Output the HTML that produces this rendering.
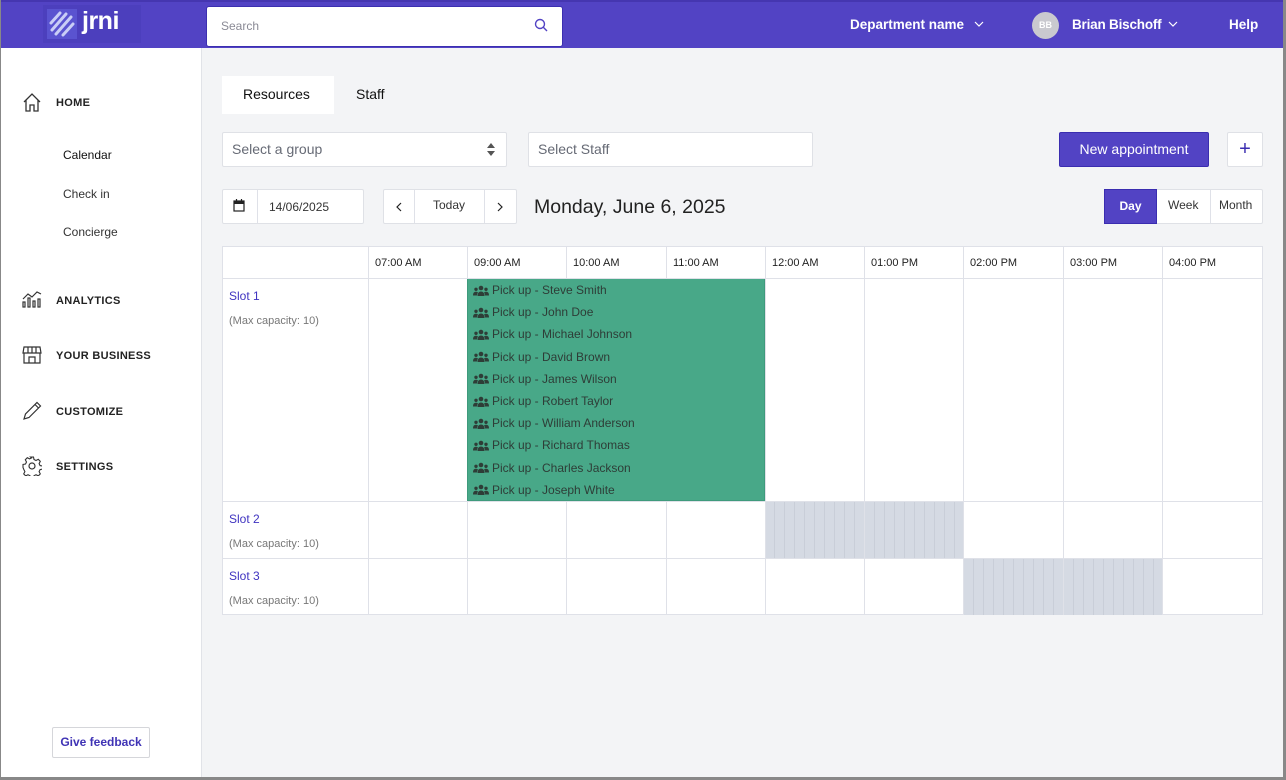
<!DOCTYPE html>
<html><head><meta charset="utf-8"><style>
*{box-sizing:border-box;margin:0;padding:0}
body{width:1286px;height:780px;overflow:hidden;background:#888;font-family:"Liberation Sans",sans-serif;position:relative}
.a{position:absolute}
#page{position:absolute;left:1px;top:0;width:1282px;height:777px;background:#f3f4f6;overflow:hidden}
#hdr{left:0;top:0;width:1282px;height:48px;background:#5243c4;border-top:2px solid #4536b0}
#side{left:0;top:48px;width:201px;height:729px;background:#fff;border-right:1px solid #e1e3e8}
.nav{font-size:11px;font-weight:bold;color:#222;letter-spacing:.3px}
.sub{font-size:12px;color:#333}
.box{background:#fff;border:1px solid #dfe1e6;border-radius:2px}
.th{font-size:11px;color:#222}
.ev{font-size:12px;color:#2e3d37;white-space:nowrap;height:22.2px;display:flex;align-items:center}
.ev svg{margin-right:3px}
.hl{position:absolute;height:1px;background:#dfe1e8}
.vl{position:absolute;width:1px;background:#dfe1e8}
.st{background:#d5dae3 repeating-linear-gradient(90deg,transparent 0,transparent 9px,#c9ced8 9px,#c9ced8 10px)}
</style></head><body>
<svg width="0" height="0" style="position:absolute"><defs><g id="pp" fill="#2e3d37"><circle cx="8" cy="3" r="2.3"/><circle cx="3" cy="4.3" r="1.7"/><circle cx="13" cy="4.3" r="1.7"/><path d="M4.5 11c0-3 1.5-4.5 3.5-4.5s3.5 1.5 3.5 4.5z"/><path d="M0 10.5c0-2.5 1-3.7 3-3.7 1 0 1.5.3 2 .8-.7.8-1 1.8-1 2.9z"/><path d="M16 10.5c0-2.5-1-3.7-3-3.7-1 0-1.5.3-2 .8.7.8 1 1.8 1 2.9z"/></g></defs></svg>
<div id="page">
<div class="a" id="hdr">
 <div class="a" style="left:42px;top:3px;width:98px;height:38px;background:#4c3fbd"></div>
 <svg class="a" style="left:46px;top:7px" width="30" height="30" viewBox="0 0 30 30"><rect width="30" height="30" fill="#5a53d0"/><g stroke="#c9cdf6" stroke-width="3" stroke-linecap="round"><line x1="4" y1="14" x2="13" y2="4"/><line x1="5" y1="21" x2="19" y2="5"/><line x1="9" y1="25" x2="24" y2="8"/><line x1="16" y1="26" x2="26" y2="15"/></g></svg>
 <div class="a" style="left:81px;top:5px;font-size:25px;font-weight:bold;color:#fff;letter-spacing:-0.5px">jrni</div>
 <div class="a" style="left:205px;top:4px;width:357px;height:41px;background:#fff;border:1px solid #3c2fb0;border-radius:3px"></div>
 <div class="a" style="left:220px;top:17px;font-size:12px;color:#8a8a95">Search</div>
 <svg class="a" style="left:533px;top:16px" width="14" height="14" viewBox="0 0 14 14"><circle cx="6" cy="6" r="4.5" fill="none" stroke="#5243c4" stroke-width="1.4"/><line x1="9.3" y1="9.3" x2="13" y2="13" stroke="#5243c4" stroke-width="1.4"/></svg>
 <div class="a" style="left:849px;top:15px;font-size:13.5px;font-weight:bold;color:#fff">Department name</div>
 <svg class="a" style="left:973px;top:19px" width="10" height="7"><path d="M1 1l4 4 4-4" fill="none" stroke="#fff" stroke-width="1.2"/></svg>
 <div class="a" style="left:1031px;top:10px;width:27px;height:27px;border-radius:50%;background:#c9c9cf;color:#fff;font-size:9px;font-weight:bold;text-align:center;line-height:27px">BB</div>
 <div class="a" style="left:1071px;top:15px;font-size:13.5px;font-weight:bold;color:#fff;letter-spacing:-0.2px">Brian Bischoff</div>
 <svg class="a" style="left:1167px;top:19px" width="10" height="7"><path d="M1 1l4 4 4-4" fill="none" stroke="#fff" stroke-width="1.2"/></svg>
 <div class="a" style="left:1228px;top:15px;font-size:13.5px;font-weight:bold;color:#fff">Help</div>
</div>
<div class="a" id="side">
 <svg class="a" style="left:21px;top:45px" width="20" height="19" viewBox="0 0 20 19"><path d="M2 9L10 1l8 8M4 7v11h4v-6h4v6h4V7" fill="none" stroke="#333" stroke-width="1.3"/></svg>
 <div class="a nav" style="left:55px;top:49px">HOME</div>
 <div class="a sub" style="left:62px;top:100px;color:#111">Calendar</div>
 <div class="a sub" style="left:62px;top:139px">Check in</div>
 <div class="a sub" style="left:62px;top:177px">Concierge</div>
 <svg class="a" style="left:21px;top:242px" width="20" height="18" viewBox="0 0 20 18"><path d="M1 9l5-5 4 3 5-5 4 2" fill="none" stroke="#333" stroke-width="1.2"/><g fill="none" stroke="#333" stroke-width="1.2"><rect x="1" y="12" width="2" height="5"/><rect x="6" y="8" width="2" height="9"/><rect x="11" y="11" width="2" height="6"/><rect x="16" y="9" width="2" height="8"/></g></svg>
 <div class="a nav" style="left:55px;top:247px">ANALYTICS</div>
 <svg class="a" style="left:21px;top:298px" width="20" height="18" viewBox="0 0 20 18"><path d="M2 1h16l1 6H1zM2 7v10h16V7M7 17v-6h6v6M6 1v6M10 1v6M14 1v6" fill="none" stroke="#333" stroke-width="1.2"/></svg>
 <div class="a nav" style="left:55px;top:302px">YOUR BUSINESS</div>
 <svg class="a" style="left:22px;top:352px" width="20" height="20" viewBox="0 0 20 20"><path d="M1 19l1.5-5L14 2.5l3.5 3.5L6 17.5zM12 4.5l3.5 3.5" fill="none" stroke="#333" stroke-width="1.2"/></svg>
 <div class="a nav" style="left:55px;top:358px">CUSTOMIZE</div>
 <svg class="a" style="left:21px;top:408px" width="20" height="20" viewBox="0 0 20 20"><circle cx="10" cy="10" r="3" fill="none" stroke="#333" stroke-width="1.2"/><path d="M8.5 1h3l.5 2.5 2 1 2.3-1.2 2 2-1.2 2.3 1 2 2.5.5v3l-2.5.5-1 2 1.2 2.3-2 2-2.3-1.2-2 1-.5 2.5h-3l-.5-2.5-2-1-2.3 1.2-2-2 1.2-2.3-1-2L1 11.5v-3l2.5-.5 1-2-1.2-2.3 2-2 2.3 1.2 2-1z" fill="none" stroke="#333" stroke-width="1.1"/></svg>
 <div class="a nav" style="left:55px;top:413px">SETTINGS</div>
 <div class="a box" style="left:51px;top:679px;width:98px;height:31px;border-color:#d5d6da;color:#3f33b5;font-size:12px;font-weight:bold;text-align:center;line-height:29px">Give feedback</div>
</div>
<div class="a" style="left:221px;top:76px;width:112px;height:38px;background:#fff"></div>
<div class="a" style="left:242px;top:86px;font-size:14px;color:#111">Resources</div>
<div class="a" style="left:355px;top:86px;font-size:14px;color:#111">Staff</div>
<div class="a box" style="left:221px;top:132px;width:285px;height:35px"></div>
<div class="a" style="left:231px;top:141px;font-size:14px;color:#666a75">Select a group</div>
<svg class="a" style="left:486px;top:143px" width="8" height="13"><path d="M0 5L4 0l4 5zM0 8l4 5 4-5z" fill="#555"/></svg>
<div class="a box" style="left:527px;top:132px;width:285px;height:35px"></div>
<div class="a" style="left:537px;top:141px;font-size:14px;color:#666a75">Select Staff</div>
<div class="a" style="left:1058px;top:132px;width:150px;height:35px;background:#5243c4;border:1px solid #3a2db0;border-radius:2px;color:#fff;font-size:14px;text-align:center;line-height:33px">New appointment</div>
<div class="a box" style="left:1226px;top:132px;width:36px;height:35px;color:#3a2db0;font-size:20px;text-align:center;line-height:32px">+</div>
<div class="a box" style="left:221px;top:189px;width:142px;height:35px"></div>
<div class="vl" style="left:256px;top:190px;height:33px"></div>
<svg class="a" style="left:232px;top:199px" width="12" height="13" viewBox="0 0 12 13"><rect x="1" y="2" width="10" height="10" fill="none" stroke="#222" stroke-width="1.2"/><rect x="1" y="2" width="10" height="3" fill="#222"/><path d="M3.5 0v3M8.5 0v3" stroke="#222" stroke-width="1.2"/></svg>
<div class="a" style="left:268px;top:200px;font-size:12px;color:#333">14/06/2025</div>
<div class="a box" style="left:382px;top:189px;width:134px;height:35px"></div>
<div class="vl" style="left:413px;top:190px;height:33px"></div>
<div class="vl" style="left:483px;top:190px;height:33px"></div>
<svg class="a" style="left:394px;top:202px" width="7" height="10"><path d="M6 1L2 5l4 4" fill="none" stroke="#222" stroke-width="1.2"/></svg>
<div class="a" style="left:432px;top:198px;font-size:12px;color:#333">Today</div>
<svg class="a" style="left:496px;top:202px" width="7" height="10"><path d="M1 1l4 4-4 4" fill="none" stroke="#222" stroke-width="1.2"/></svg>
<div class="a" style="left:533px;top:196px;font-size:19.5px;color:#222">Monday, June 6, 2025</div>
<div class="a box" style="left:1103px;top:189px;width:159px;height:35px"></div>
<div class="a" style="left:1103px;top:189px;width:53px;height:35px;background:#5243c4;border:1px solid #3a2db0;color:#fff;font-size:12px;font-weight:bold;text-align:center;line-height:33px">Day</div>
<div class="vl" style="left:1209px;top:190px;height:33px"></div>
<div class="a" style="left:1167px;top:198px;font-size:12px;color:#333">Week</div>
<div class="a" style="left:1218px;top:198px;font-size:12px;color:#333">Month</div>
<div class="a" style="left:221px;top:246px;width:1041px;height:369px;background:#fff;border:1px solid #dfe1e8"></div>
<div class="a" style="left:466px;top:278px;width:298px;height:223px;background:#48a888;border:1px solid #3f9a7c"></div>
<div class="a st" style="left:764px;top:502px;width:199px;height:56px"></div>
<div class="a st" style="left:963px;top:559px;width:199px;height:56px"></div>
<div class="hl" style="left:221px;top:278px;width:1041px"></div>
<div class="hl" style="left:221px;top:501px;width:1041px"></div>
<div class="hl" style="left:221px;top:558px;width:1041px"></div>
<div class="vl" style="left:367px;top:246px;height:369px"></div>
<div class="vl" style="left:466px;top:246px;height:32px"></div>
<div class="vl" style="left:565px;top:246px;height:32px"></div>
<div class="vl" style="left:665px;top:246px;height:32px"></div>
<div class="vl" style="left:466px;top:501px;height:114px"></div>
<div class="vl" style="left:565px;top:501px;height:114px"></div>
<div class="vl" style="left:665px;top:501px;height:114px"></div>
<div class="vl" style="left:764px;top:246px;height:369px"></div>
<div class="vl" style="left:863px;top:246px;height:369px"></div>
<div class="vl" style="left:962px;top:246px;height:369px"></div>
<div class="vl" style="left:1062px;top:246px;height:369px"></div>
<div class="vl" style="left:1161px;top:246px;height:369px"></div>
<div class="a th" style="left:374px;top:257px">07:00 AM</div>
<div class="a th" style="left:473px;top:257px">09:00 AM</div>
<div class="a th" style="left:572px;top:257px">10:00 AM</div>
<div class="a th" style="left:672px;top:257px">11:00 AM</div>
<div class="a th" style="left:771px;top:257px">12:00 AM</div>
<div class="a th" style="left:870px;top:257px">01:00 PM</div>
<div class="a th" style="left:969px;top:257px">02:00 PM</div>
<div class="a th" style="left:1069px;top:257px">03:00 PM</div>
<div class="a th" style="left:1168px;top:257px">04:00 PM</div>
<div class="a" style="left:228px;top:289px;font-size:12px;color:#3f33c0">Slot 1</div>
<div class="a" style="left:228px;top:315px;font-size:11px;color:#777">(Max capacity: 10)</div>
<div class="a" style="left:228px;top:512px;font-size:12px;color:#3f33c0">Slot 2</div>
<div class="a" style="left:228px;top:538px;font-size:11px;color:#777">(Max capacity: 10)</div>
<div class="a" style="left:228px;top:569px;font-size:12px;color:#3f33c0">Slot 3</div>
<div class="a" style="left:228px;top:595px;font-size:11px;color:#777">(Max capacity: 10)</div>
<div class="a" style="left:472px;top:279px">
<div class="ev"><svg width="16" height="11"><use href="#pp"/></svg>Pick up - Steve Smith</div>
<div class="ev"><svg width="16" height="11"><use href="#pp"/></svg>Pick up - John Doe</div>
<div class="ev"><svg width="16" height="11"><use href="#pp"/></svg>Pick up - Michael Johnson</div>
<div class="ev"><svg width="16" height="11"><use href="#pp"/></svg>Pick up - David Brown</div>
<div class="ev"><svg width="16" height="11"><use href="#pp"/></svg>Pick up - James Wilson</div>
<div class="ev"><svg width="16" height="11"><use href="#pp"/></svg>Pick up - Robert Taylor</div>
<div class="ev"><svg width="16" height="11"><use href="#pp"/></svg>Pick up - William Anderson</div>
<div class="ev"><svg width="16" height="11"><use href="#pp"/></svg>Pick up - Richard Thomas</div>
<div class="ev"><svg width="16" height="11"><use href="#pp"/></svg>Pick up - Charles Jackson</div>
<div class="ev"><svg width="16" height="11"><use href="#pp"/></svg>Pick up - Joseph White</div>
</div>
</div>
</body></html>
